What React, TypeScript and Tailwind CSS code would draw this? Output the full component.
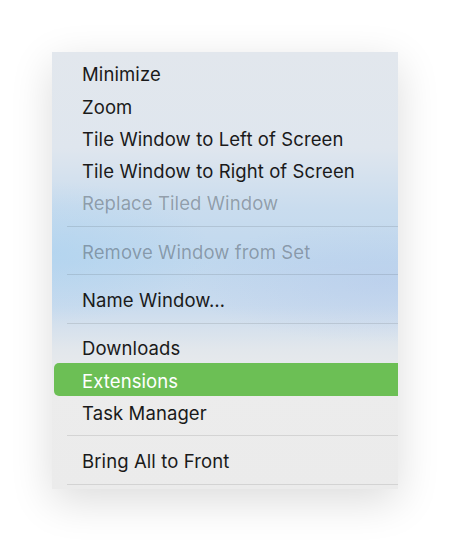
import React from "react";

type Item = { label: string; disabled?: boolean; active?: boolean } | "sep";

const items: Item[] = [
  { label: "Minimize" },
  { label: "Zoom" },
  { label: "Tile Window to Left of Screen" },
  { label: "Tile Window to Right of Screen" },
  { label: "Replace Tiled Window", disabled: true },
  "sep",
  { label: "Remove Window from Set", disabled: true },
  "sep",
  { label: "Name Window…" },
  "sep",
  { label: "Downloads" },
  { label: "Extensions", active: true },
  { label: "Task Manager" },
  "sep",
  { label: "Bring All to Front" },
  "sep",
];

export default function App() {
  return (
    <div className="w-[450px] h-[542px] bg-white pt-[52px] pl-[52px]">
      <div
        className="relative w-[346px] h-[437px] overflow-hidden pt-[5px] shadow-[0_12px_40px_rgba(0,0,0,0.14)] bg-[linear-gradient(180deg,#e2e7ed_0%,#dfe6ee_22%,#c9dcee_36%,#c0d8ee_48%,#c9dbee_58%,#e2e7ec_68%,#ececec_76%,#ebebeb_100%)]"
        style={{ fontFamily: "Inter, 'Liberation Sans', sans-serif" }}
      >
        <div className="pointer-events-none absolute inset-0 bg-[radial-gradient(ellipse_160px_70px_at_0px_200px,rgba(170,210,240,0.55),transparent)]" />
        <div className="pointer-events-none absolute inset-0 bg-[radial-gradient(ellipse_200px_60px_at_330px_230px,rgba(180,200,235,0.45),transparent)]" />
        <div className="relative">
          {items.map((it, i) =>
            it === "sep" ? (
              <div key={i} className="h-4 flex items-center pl-[15px]">
                <div className="h-px w-full bg-black/10" />
              </div>
            ) : (
              <div
                key={i}
                className={
                  "h-[32.3px] flex items-center pl-[30px] pt-[4px] text-[18.5px] tracking-[0.1px] " +
                  (it.active
                    ? "ml-[2px] -mr-3 rounded-[5px] bg-[#6cbf55] text-white"
                    : it.disabled
                    ? "text-black/30"
                    : "text-[#1a1a1a]")
                }
              >
                <span className={it.active ? "-ml-[2px]" : ""}>{it.label}</span>
              </div>
            )
          )}
        </div>
      </div>
    </div>
  );
}
